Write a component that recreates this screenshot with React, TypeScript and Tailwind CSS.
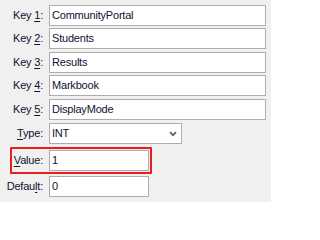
const font = '[font-family:"Liberation_Sans",Tahoma,Arial,sans-serif]';

type RowProps = {
  label: React.ReactNode;
  children: React.ReactNode;
  className?: string;
};

function Row({label, children, className = ''}: RowProps) {
  return (
    <div className={`flex h-[21px] items-center ${className}`}>
      <label className="w-[43px] shrink-0 text-right leading-none">{label}</label>
      <div className="ml-[6px] flex h-full shrink-0">{children}</div>
    </div>
  );
}

function TextBox({value, width}: {value: string; width: string}) {
  return (
    <div
      className={`flex h-[21px] shrink-0 items-center border border-[#adadad] bg-white pl-[2px] ${width}`}
    >
      {value}
    </div>
  );
}

function KeyLabel({n}: {n: number}) {
  return (
    <>
      Key <span className="underline underline-offset-[2px]">{n}</span>:
    </>
  );
}

export default function App() {
  const keys = ['CommunityPortal', 'Students', 'Results', 'Markbook', 'DisplayMode'];
  const tops = ['mt-0', 'mt-[2px]', 'mt-[3px]', 'mt-[2px]', 'mt-[3px]'];

  return (
    <div
      className={`flex h-[202px] w-[271px] flex-col bg-[#f0f0f0] pt-[5px] text-[11px] tracking-[-0.2px] text-[#101030] ${font}`}
    >
      {keys.map((k, i) => (
        <Row key={k} label={<KeyLabel n={i + 1} />} className={tops[i]}>
          <TextBox value={k} width="w-[217px]" />
        </Row>
      ))}

      <Row
        className="mt-[3px]"
        label={
          <>
            <span className="underline underline-offset-[2px]">T</span>ype:
          </>
        }
      >
        <div className="flex h-[21px] w-[133px] items-center justify-between border border-[#adadad] bg-white pl-[2px] pr-[4px]">
          <span>INT</span>
          <svg width="8" height="6" viewBox="0 0 8 6" aria-hidden="true">
            <path
              d="M1 1.2L4 4.2L7 1.2"
              fill="none"
              stroke="#606060"
              strokeWidth="1.8"
            />
          </svg>
        </div>
      </Row>

      <div className="ml-[10px] mt-[3px] flex h-[27px] w-[142px] items-center rounded-[1px] border-2 border-[#ee1c1c]">
        <label className="w-[31px] shrink-0 text-right leading-none">
          <span className="underline underline-offset-[2px]">V</span>alue:
        </label>
        <div className="ml-[6px] flex shrink-0">
          <TextBox value="1" width="w-[100px]" />
        </div>
      </div>

      <Row
        className="mt-[2px]"
        label={
          <>
            Defau<span className="underline underline-offset-[2px]">l</span>t:
          </>
        }
      >
        <TextBox value="0" width="w-[100px]" />
      </Row>
    </div>
  );
}
